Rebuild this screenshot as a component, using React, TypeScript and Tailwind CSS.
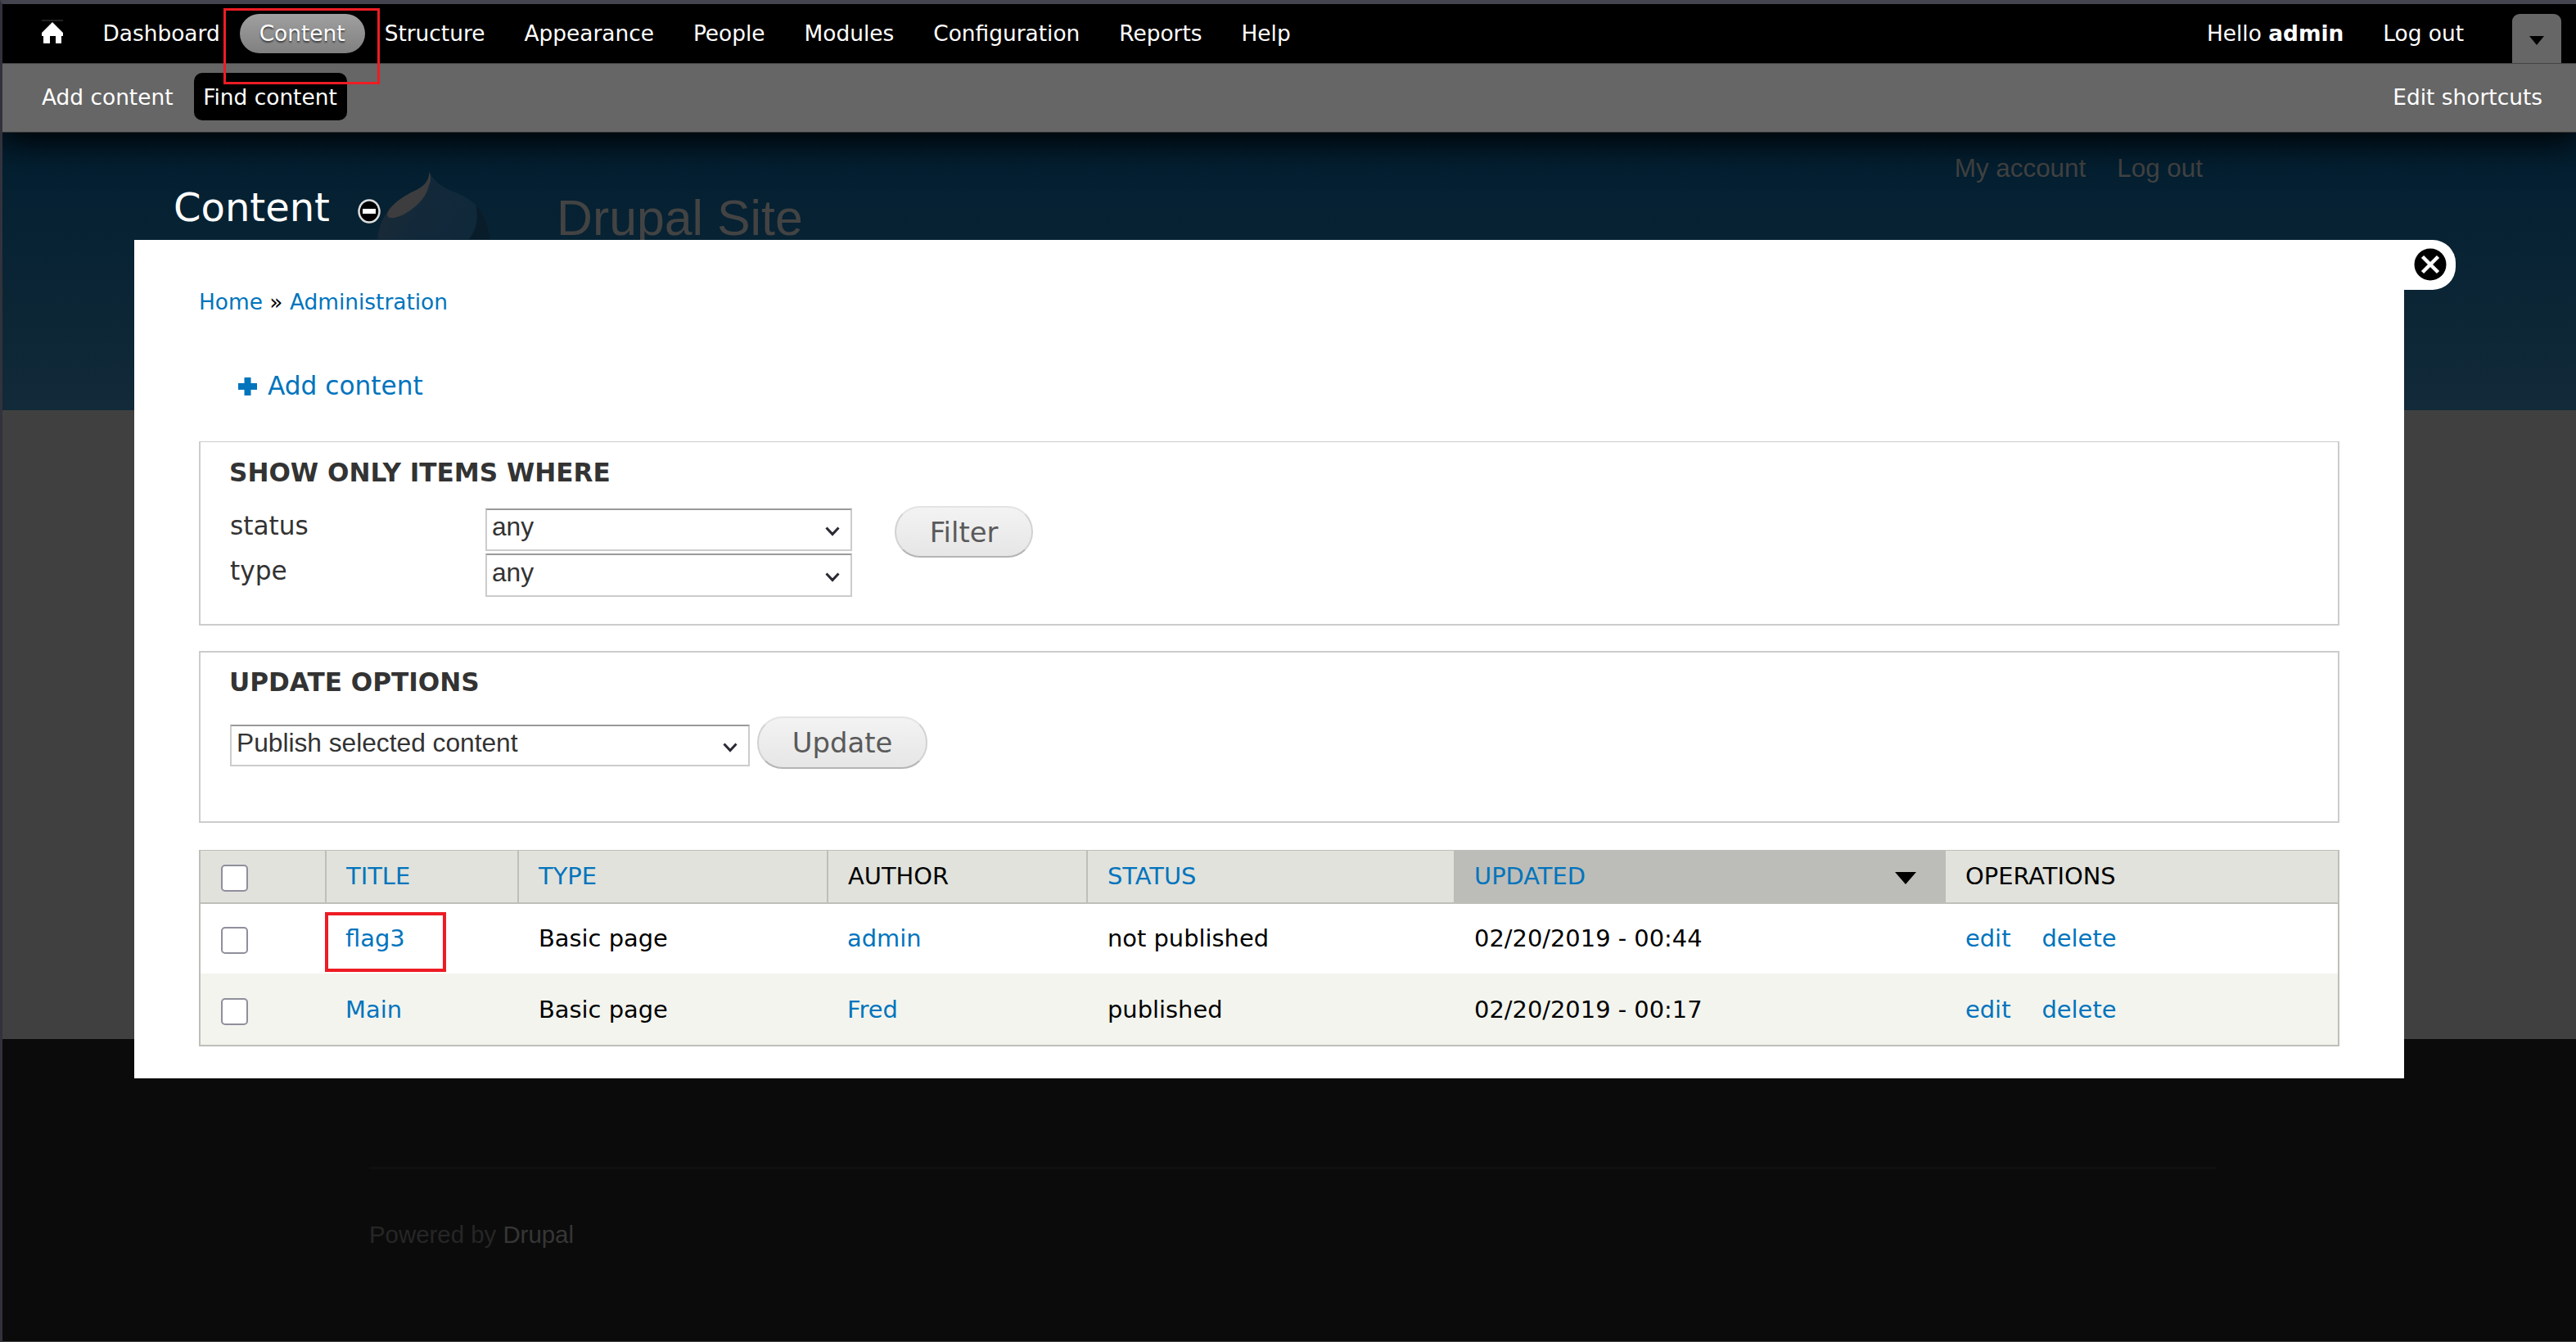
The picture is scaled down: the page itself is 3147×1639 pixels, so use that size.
import React from 'react';
import clsx from 'clsx';

interface NodeRow {
  title: string;
  type: string;
  author: string;
  status: string;
  updated: string;
}

const menuItems = ['Dashboard', 'Content', 'Structure', 'Appearance', 'People', 'Modules', 'Configuration', 'Reports', 'Help'];

const nodes: NodeRow[] = [
  { title: 'flag3', type: 'Basic page', author: 'admin', status: 'not published', updated: '02/20/2019 - 00:44' },
  { title: 'Main', type: 'Basic page', author: 'Fred', status: 'published', updated: '02/20/2019 - 00:17' },
];

const columns = 'grid grid-cols-[154px_235px_378px_317px_447px_601px_1fr]';

const Chevron: React.FC = () => (
  <svg className="mt-[4px] h-[12px] w-[18px]" viewBox="0 0 18 12" fill="none" stroke="#2b2a33" strokeWidth="3">
    <path d="M1.5 1.5 L9 9.5 L16.5 1.5" />
  </svg>
);

const Select: React.FC<{ value: string; className: string }> = ({ value, className }) => (
  <div
    className={clsx(
      'flex items-center justify-between border-2 border-[#ccc] border-t-[#999] bg-white pr-[13px] pl-[6px] font-["Liberation_Sans",sans-serif] text-[31.7px] text-[#333]',
      className,
    )}
  >
    <span className="-mt-[8px] leading-[40px]">{value}</span>
    <Chevron />
  </div>
);

const Button: React.FC<{ label: string; className: string }> = ({ label, className }) => (
  <button
    className={clsx(
      'rounded-[31px] border-2 border-[#e4e4e4] border-x-[#d2d2d2] border-b-[#b4b4b4] bg-linear-to-b from-[#f3f3f3] to-[#e6e6e6] text-center text-[33.8px] leading-[57px] text-[#5a5a5a]',
      className,
    )}
  >
    {label}
  </button>
);

const Checkbox: React.FC = () => (
  <input type="checkbox" className="block h-[33px] w-[33px] appearance-none rounded-[5px] border-2 border-[#8f8f9d] bg-white" />
);

const Toolbar: React.FC = () => (
  <header className="relative text-[26.4px] text-white shadow-[0_6px_40px_4px_#000]">
    <div className="flex h-[73px] justify-between border-b border-[#444] bg-black pt-[12px]">
      <div className="flex">
        <svg className="mt-[6px] ml-[47px] h-[31px] w-[28px]" viewBox="0 0 28 31">
          <rect x="1" y="1" width="26" height="2" fill="#222" />
          <path d="M14 4 L27 17 L27 21 L25 21 L25 30 L18 30 L18 21 L11 21 L11 30 L3 30 L3 21 L1 21 L1 17 Z" fill="#fff" />
        </svg>
        <nav className="ml-[23.5px] flex leading-[48px]">
          {menuItems.map((item) => (
            <a
              key={item}
              className={clsx(
                'h-[48px] px-[24px]',
                item === 'Content' &&
                  'rounded-[24px] bg-linear-to-b from-[#a0a0a0] to-[#808080] [text-shadow:0_2px_2px_rgba(0,0,0,0.6)]',
              )}
            >
              {item}
            </a>
          ))}
        </nav>
      </div>
      <div className="flex leading-[48px]">
        <span>
          Hello <strong>admin</strong>
        </span>
        <a className="ml-[48px]">Log out</a>
        <div className="mr-[18px] ml-[59px] flex h-[60px] w-[60px] justify-center rounded-t-[9px] bg-[#666] pt-[27px]">
          <svg className="h-[11px] w-[18px]" viewBox="0 0 18 11">
            <path d="M0 0 H18 L9 11 Z" fill="#000" />
          </svg>
        </div>
      </div>
    </div>
    <div className="flex h-[84px] items-start justify-between border-b border-[#333] bg-[#666] pt-[11px] pr-[41px] pl-[48px] leading-[59px]">
      <div className="flex">
        <a>Add content</a>
        <a className="ml-[25px] h-[58px] w-[187px] rounded-[10px] bg-black text-center">Find content</a>
      </div>
      <a>Edit shortcuts</a>
    </div>
  </header>
);

const DrupalLogo: React.FC = () => (
  <svg className="h-[84px] w-[140px]" viewBox="123 55 420 252">
    <defs>
      <linearGradient id="drop" x1="0" y1="0" x2="1" y2="0.3">
        <stop offset="0" stopColor="#1f2a33" />
        <stop offset="0.5" stopColor="#13293a" />
        <stop offset="1" stopColor="#0f283a" />
      </linearGradient>
    </defs>
    <path
      d="M313 58 C313 85 305 103 270 125 C245 137 200 158 168 195 C142 230 126 265 124 309 H535 C534 275 527 245 510 215 C490 180 460 160 430 145 C400 130 335 115 313 58 Z"
      fill="url(#drop)"
    />
    <path
      d="M313 60 C318 75 321 88 314 105 C305 140 290 165 255 193 C225 218 190 232 170 229 C155 226 158 212 168 197 C200 158 245 137 270 125 C303 106 312 88 313 60 Z"
      fill="#3d3d3f"
    />
    <path d="M484 183 C515 215 532 255 535 309 H458 C485 275 496 235 484 183 Z" fill="#081c2a" />
  </svg>
);

const Overlay: React.FC = () => (
  <section className="absolute top-[293px] left-[164px] h-[1023.5px] w-[2773px] bg-white pt-[47px] pr-[79px] pl-[79px]">
    <div className="absolute bottom-full left-[48px] flex h-[74px] items-start text-white">
      <h1 className="text-[48px] leading-[69px]">Content</h1>
      <svg className="mt-[24px] ml-[34px] h-[30px] w-[28px]" viewBox="0 0 28 30">
        <ellipse cx="14" cy="15" rx="12.5" ry="13.5" fill="#000" stroke="#ddd" strokeWidth="2.5" />
        <rect x="6" y="12" width="16" height="6" fill="#fff" />
      </svg>
    </div>
    <div className="absolute top-0 left-full h-[61px] w-[63px] rounded-r-[28px] bg-white">
      <svg className="mt-[10px] ml-[12px] h-[40px] w-[40px]" viewBox="0 0 40 40">
        <circle cx="20" cy="20" r="19.5" fill="#000" />
        <path d="M10.5 10.5 L29.5 29.5 M29.5 10.5 L10.5 29.5" stroke="#fff" strokeWidth="4.5" />
      </svg>
    </div>

    <nav className="h-[56px] text-[26.4px] leading-[57px] text-black">
      <a className="text-[#0074bd]">Home</a> » <a className="text-[#0074bd]">Administration</a>
    </nav>
    <div className="mt-[44px] flex h-[62px] items-center pl-[48px] text-[31.2px] leading-[62px] text-[#0074bd]">
      <svg className="mt-[2px] mr-[13px] h-[22px] w-[23px]" viewBox="0 0 23 22">
        <path d="M7.5 0 H15.5 V7 H23 V15 H15.5 V22 H7.5 V15 H0 V7 H7.5 Z" fill="#0074bd" />
      </svg>
      <a>Add content</a>
    </div>

    <fieldset className="mt-[37px] h-[225px] border-2 border-t border-[#ccc] px-[35px] pt-[17px] text-[#333]">
      <h2 className="text-[31.1px] leading-[41px] font-bold">SHOW ONLY ITEMS WHERE</h2>
      <div className="mt-[20px] flex">
        <div className="grid w-[313px] grid-rows-[55px_55px] pl-[1px] text-[31.2px] leading-[49px]">
          <label>status</label>
          <label>type</label>
        </div>
        <div className="mt-[3px] flex flex-col gap-[3px]">
          <Select value="any" className="h-[52px] w-[448px]" />
          <Select value="any" className="h-[53px] w-[448px]" />
        </div>
        <Button label="Filter" className="ml-[52px] h-[63px] w-[169px] pt-[2px]" />
      </div>
    </fieldset>

    <fieldset className="mt-[31px] h-[210px] border-2 border-[#ccc] px-[35px] pt-[16px] text-[#333]">
      <h2 className="text-[31.1px] leading-[41px] font-bold">UPDATE OPTIONS</h2>
      <div className="mt-[21px] flex">
        <Select value="Publish selected content" className="mt-[10px] ml-[1px] h-[51px] w-[635px]" />
        <Button label="Update" className="ml-[9px] h-[64px] w-[208px]" />
      </div>
    </fieldset>

    <div className="mt-[33px] w-[2615px] border-2 border-t border-[#bebfb9] text-[28.9px] text-black">
      <div className={clsx(columns, 'h-[65px] border-b-2 border-[#bebfb9] bg-[#e1e2dc] leading-[63px] text-[#0074bd]')}>
        <div className="border-r-2 border-[#bebfb9] pt-[17px] pl-[25px]">
          <Checkbox />
        </div>
        <div className="border-r-2 border-[#bebfb9] pl-[24px]">TITLE</div>
        <div className="border-r-2 border-[#bebfb9] pl-[24px]">TYPE</div>
        <div className="border-r-2 border-[#bebfb9] pl-[24px] text-black">AUTHOR</div>
        <div className="pl-[24px]">STATUS</div>
        <div className="flex justify-between bg-[#bcbdb8] pr-[36px] pl-[25px]">
          UPDATED
          <svg className="mt-[26px] h-[15px] w-[26px]" viewBox="0 0 26 15">
            <path d="M0 0 H26 L13 15 Z" fill="#000" />
          </svg>
        </div>
        <div className="pl-[24px] text-black">OPERATIONS</div>
      </div>
      {nodes.map((node, i) => (
        <div key={node.title} className={clsx(columns, i % 2 ? 'h-[87px] bg-[#f3f4ee] leading-[88px]' : 'h-[85px] bg-white leading-[84px]')}>
          <div className={clsx('pl-[25px]', i % 2 ? 'pt-[30px]' : 'pt-[28px]')}>
            <Checkbox />
          </div>
          <div className="relative pl-[23px] text-[#0074bd]">
            {node.title}
            {node.title === 'flag3' && <div className="absolute top-[10px] -left-[2px] h-[73px] w-[148px] border-4 border-[#ed1c24]" />}
          </div>
          <div className="pl-[24px]">{node.type}</div>
          <div className="pl-[23px] text-[#0074bd]">{node.author}</div>
          <div className="pl-[24px]">{node.status}</div>
          <div className="pl-[25px]">{node.updated}</div>
          <div className="flex gap-[38px] pl-[24px] text-[#0074bd]">
            <a>edit</a>
            <a>delete</a>
          </div>
        </div>
      ))}
    </div>
  </section>
);

export default function App() {
  return (
    <div className='relative flex h-[1639px] w-[3147px] flex-col overflow-hidden border-t-[5px] border-l-[3px] border-t-[#43444e] border-l-[#32323c] bg-[#404040] font-["DejaVu_Sans",sans-serif]'>
      <div className="relative z-10">
        <Toolbar />
      </div>
      <div className='flex h-[339px] justify-between bg-linear-to-b from-[#021e30] to-[#122a39] font-["Liberation_Sans",sans-serif] text-[#434343]'>
        <div className="flex pt-[46px] pl-[458px]">
          <DrupalLogo />
          <span className="mt-[23px] ml-[79px] text-[60.8px] leading-[70px]">Drupal Site</span>
        </div>
        <div className="flex gap-[38px] pt-[23px] pr-[456px] text-[31.4px] leading-[41px]">
          <a>My account</a>
          <a>Log out</a>
        </div>
      </div>
      <footer className='mt-[768px] h-[369px] bg-[#0b0b0b] pt-[156px] pr-[440px] pl-[448px] font-["Liberation_Sans",sans-serif] text-[29.4px] text-[#262626]'>
        <div className="border-t-[3px] border-[#101010] pt-[60px] leading-[40px]">
          Powered by <a className="text-[#363636]">Drupal</a>
        </div>
      </footer>

      <div className="absolute -top-[5px] -left-[3px] z-0">
        <Overlay />
      </div>
      <div className="absolute top-[5px] left-[270px] z-20 h-[93px] w-[191px] border-[3px] border-[#ed1c24]" />
    </div>
  );
}
